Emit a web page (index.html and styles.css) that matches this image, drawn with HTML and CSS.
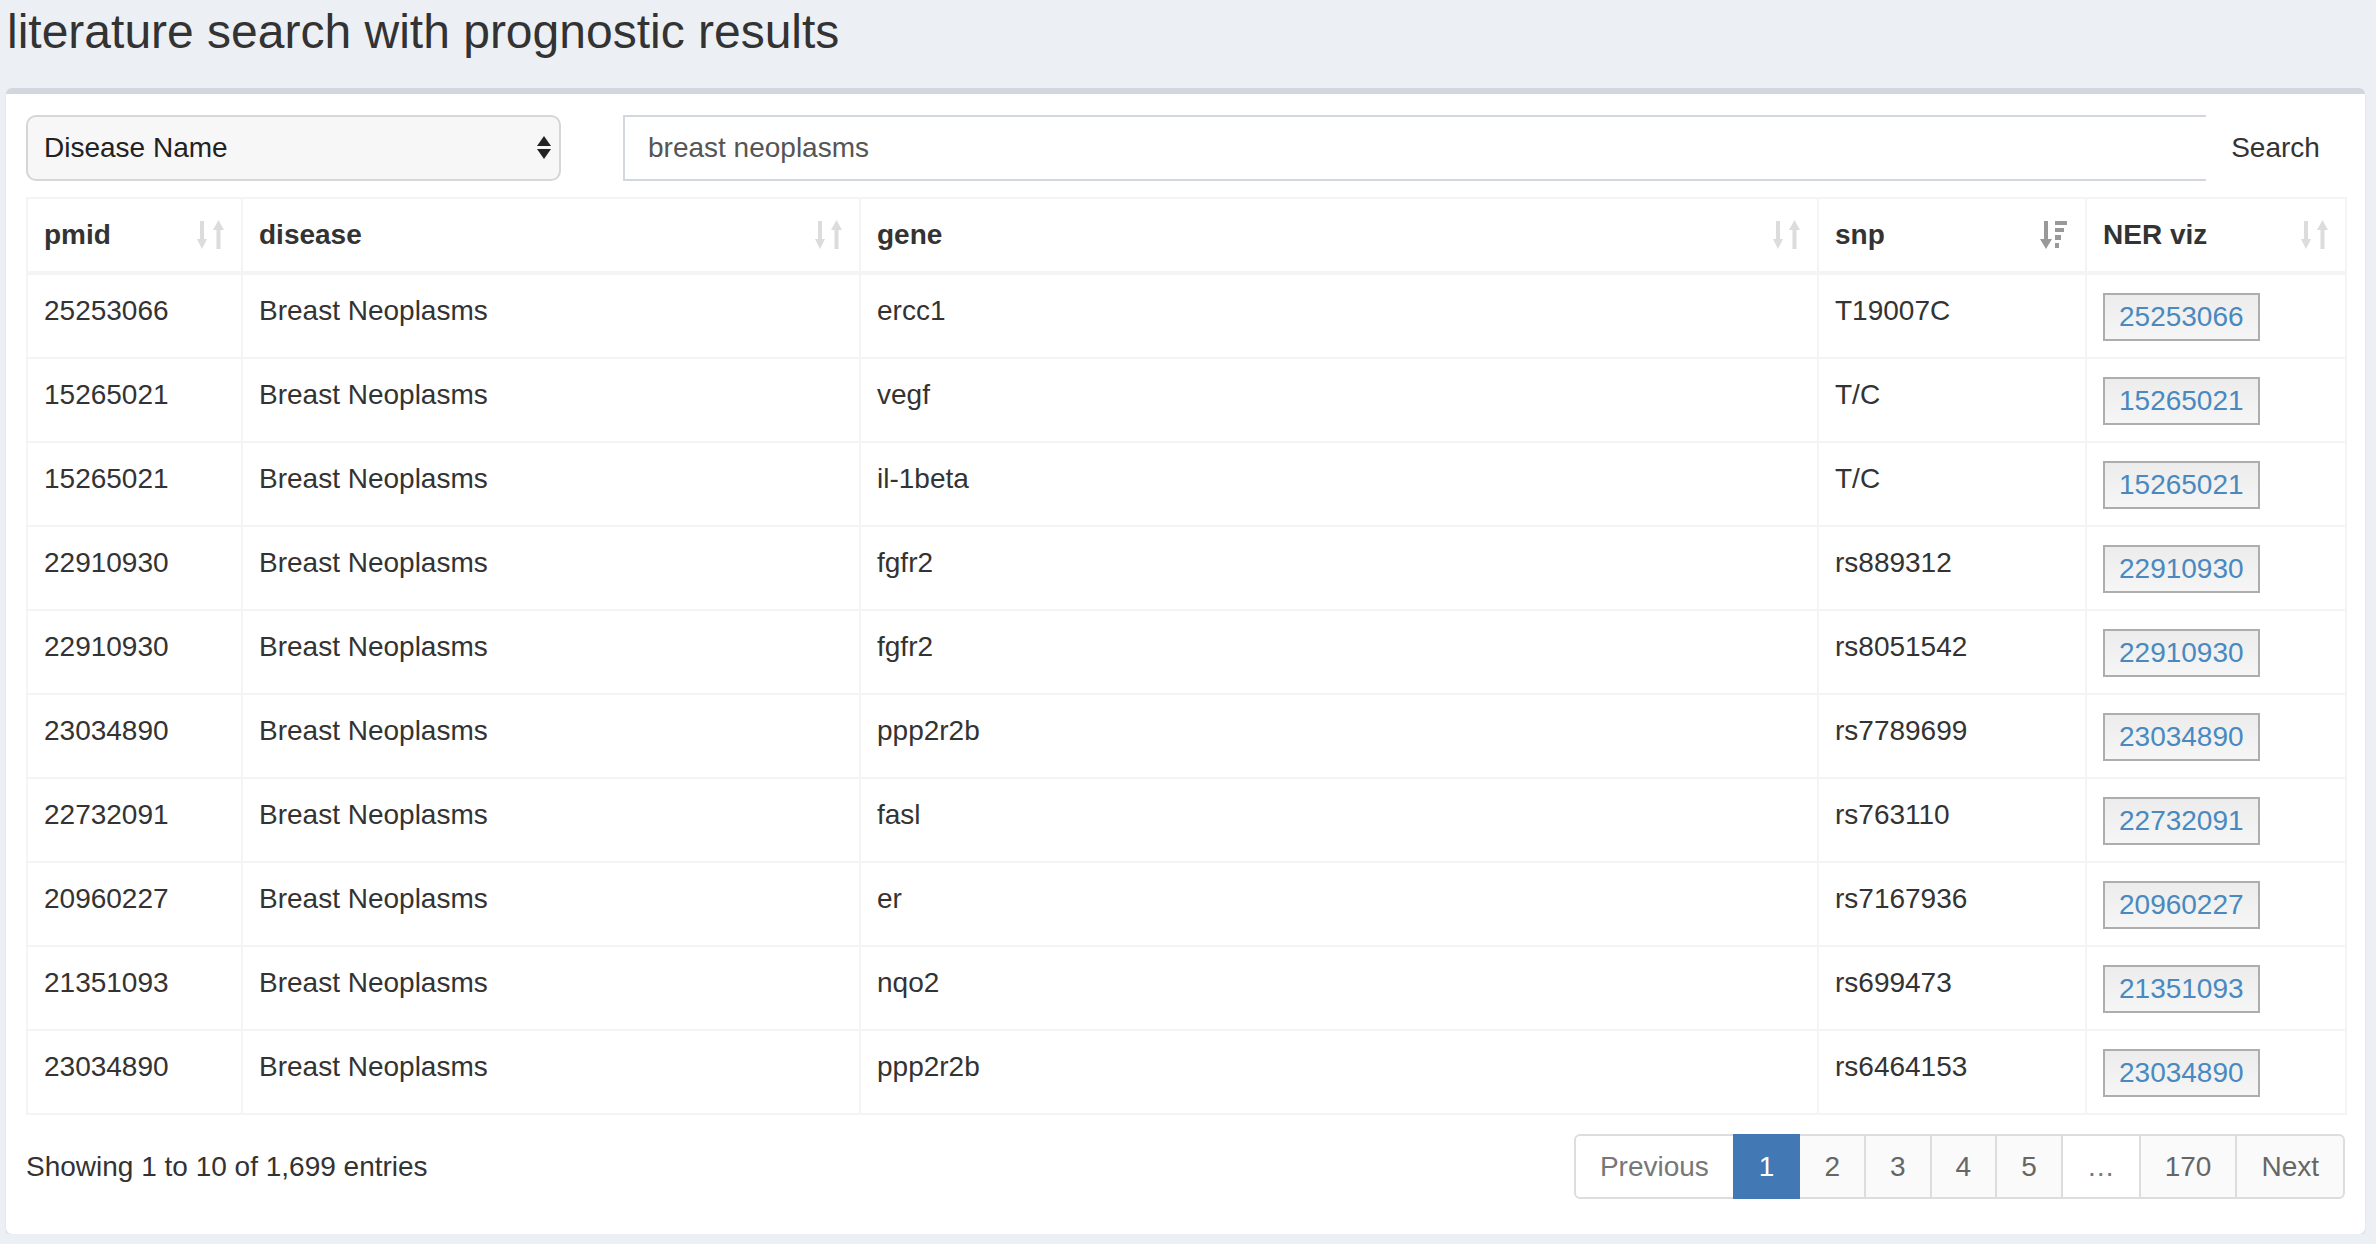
FILE: index.html
```html
<!DOCTYPE html>
<html>
<head>
<meta charset="utf-8">
<title>literature search with prognostic results</title>
<link rel="stylesheet" href="styles.css">
</head>
<body>
<h1 class="page-title">literature search with prognostic results</h1>
<div class="box">
  <div class="search-row">
    <div class="select">
      <span>Disease Name</span>
      <svg class="select-arrows" width="14" height="24" viewBox="0 0 14 24"><polygon points="7,0 14,10 0,10" fill="#222"/><polygon points="0,13 14,13 7,23" fill="#222"/></svg>
    </div>
    <div class="input-group">
      <div class="text-input">breast neoplasms</div>
      <div class="search-btn">Search</div>
    </div>
  </div>
  <table class="grid">
    <colgroup>
      <col class="c1"><col class="c2"><col class="c3"><col class="c4"><col class="c5">
    </colgroup>
    <thead>
      <tr>
        <th><div class="th-in"><span>pmid</span><svg class="sort" width="27" height="30" viewBox="0 0 27 30"><rect x="3" y="1" width="4" height="20" fill="#dcdcdc"/><polygon points="0,19 10,19 5,29" fill="#dcdcdc"/><polygon points="21.5,0 27,10 16,10" fill="#dcdcdc"/><rect x="19.5" y="9" width="4" height="20" fill="#dcdcdc"/></svg></div></th>
        <th><div class="th-in"><span>disease</span><svg class="sort" width="27" height="30" viewBox="0 0 27 30"><rect x="3" y="1" width="4" height="20" fill="#dcdcdc"/><polygon points="0,19 10,19 5,29" fill="#dcdcdc"/><polygon points="21.5,0 27,10 16,10" fill="#dcdcdc"/><rect x="19.5" y="9" width="4" height="20" fill="#dcdcdc"/></svg></div></th>
        <th><div class="th-in"><span>gene</span><svg class="sort" width="27" height="30" viewBox="0 0 27 30"><rect x="3" y="1" width="4" height="20" fill="#dcdcdc"/><polygon points="0,19 10,19 5,29" fill="#dcdcdc"/><polygon points="21.5,0 27,10 16,10" fill="#dcdcdc"/><rect x="19.5" y="9" width="4" height="20" fill="#dcdcdc"/></svg></div></th>
        <th><div class="th-in"><span>snp</span><svg class="sort" width="28" height="30" viewBox="0 0 28 30"><rect x="4" y="1" width="4" height="20" fill="#999"/><polygon points="0,19 12,19 6,29" fill="#999"/><rect x="15" y="1" width="12" height="4" fill="#999"/><rect x="15" y="8" width="9" height="4" fill="#999"/><rect x="15" y="15" width="6" height="5" fill="#999"/><rect x="15" y="23" width="4" height="5" fill="#999"/></svg></div></th>
        <th><div class="th-in"><span>NER viz</span><svg class="sort" width="27" height="30" viewBox="0 0 27 30"><rect x="3" y="1" width="4" height="20" fill="#dcdcdc"/><polygon points="0,19 10,19 5,29" fill="#dcdcdc"/><polygon points="21.5,0 27,10 16,10" fill="#dcdcdc"/><rect x="19.5" y="9" width="4" height="20" fill="#dcdcdc"/></svg></div></th>
      </tr>
    </thead>
    <tbody>
      <tr><td>25253066</td><td>Breast Neoplasms</td><td>ercc1</td><td>T19007C</td><td><span class="ner">25253066</span></td></tr>
      <tr><td>15265021</td><td>Breast Neoplasms</td><td>vegf</td><td>T/C</td><td><span class="ner">15265021</span></td></tr>
      <tr><td>15265021</td><td>Breast Neoplasms</td><td>il-1beta</td><td>T/C</td><td><span class="ner">15265021</span></td></tr>
      <tr><td>22910930</td><td>Breast Neoplasms</td><td>fgfr2</td><td>rs889312</td><td><span class="ner">22910930</span></td></tr>
      <tr><td>22910930</td><td>Breast Neoplasms</td><td>fgfr2</td><td>rs8051542</td><td><span class="ner">22910930</span></td></tr>
      <tr><td>23034890</td><td>Breast Neoplasms</td><td>ppp2r2b</td><td>rs7789699</td><td><span class="ner">23034890</span></td></tr>
      <tr><td>22732091</td><td>Breast Neoplasms</td><td>fasl</td><td>rs763110</td><td><span class="ner">22732091</span></td></tr>
      <tr><td>20960227</td><td>Breast Neoplasms</td><td>er</td><td>rs7167936</td><td><span class="ner">20960227</span></td></tr>
      <tr><td>21351093</td><td>Breast Neoplasms</td><td>nqo2</td><td>rs699473</td><td><span class="ner">21351093</span></td></tr>
      <tr><td>23034890</td><td>Breast Neoplasms</td><td>ppp2r2b</td><td>rs6464153</td><td><span class="ner">23034890</span></td></tr>
    </tbody>
  </table>
  <div class="footer-row">
    <div class="info">Showing 1 to 10 of 1,699 entries</div>
    <ul class="pagination">
      <li class="pg disabled first">Previous</li>
      <li class="pg active">1</li>
      <li class="pg">2</li>
      <li class="pg">3</li>
      <li class="pg">4</li>
      <li class="pg">5</li>
      <li class="pg disabled">…</li>
      <li class="pg">170</li>
      <li class="pg last">Next</li>
    </ul>
  </div>
</div>
</body>
</html>
```
FILE: styles.css
```css
html, body {
  margin: 0;
  padding: 0;
  background: #ecf0f5;
  font-family: "Liberation Sans", Arial, sans-serif;
  color: #333;
}

.page-title {
  margin: 0;
  padding: 6px 0 0 7px;
  font-size: 48px;
  font-weight: normal;
  line-height: 52px;
  height: 84px;
  box-sizing: border-box;
  color: #333;
}

.box {
  margin-left: 6px;
  width: 2359px;
  box-sizing: border-box;
  background: #fff;
  border-top: 6px solid #d2d6de;
  border-radius: 6px;
  box-shadow: 0 2px 2px rgba(0, 0, 0, 0.1);
  padding: 21px 20px 35px 20px;
  margin-top: 4px;
}

.search-row {
  display: flex;
  align-items: stretch;
  height: 66px;
  gap: 62px;
}

.select {
  width: 535px;
  box-sizing: border-box;
  background: #f7f7f7;
  border: 2px solid #d6d6d6;
  border-radius: 10px;
  display: flex;
  align-items: center;
  justify-content: space-between;
  padding: 0 8px 0 16px;
  font-size: 28px;
  color: #222;
}

.select-arrows {
  display: block;
}

.input-group {
  flex: 1;
  display: flex;
}

.text-input {
  flex: 1;
  box-sizing: border-box;
  border: 2px solid #d2d6de;
  border-right: none;
  display: flex;
  align-items: center;
  padding-left: 23px;
  font-size: 28px;
  color: #555;
}

.search-btn {
  width: 139px;
  display: flex;
  align-items: center;
  justify-content: center;
  font-size: 28px;
  color: #333;
}

.grid {
  margin-top: 16px;
  width: 2319px;
  table-layout: fixed;
  border-collapse: collapse;
  border: 2px solid #f4f4f4;
  font-size: 28px;
}

.c1 { width: 215px; }
.c2 { width: 618px; }
.c3 { width: 958px; }
.c4 { width: 268px; }
.c5 { width: 260px; }

.grid th {
  border: 2px solid #f4f4f4;
  border-bottom: 4px solid #f4f4f4;
  padding: 16px 16px 16px 16px;
  text-align: left;
  font-weight: bold;
  line-height: 40px;
  color: #333;
}

.th-in {
  display: flex;
  align-items: center;
  justify-content: space-between;
}

.sort {
  display: block;
  margin-right: 1px;
}

.grid td {
  border: 2px solid #f4f4f4;
  padding: 16px 16px;
  height: 50px;
  line-height: 40px;
  vertical-align: top;
  color: #333;
  white-space: nowrap;
}

.ner {
  display: inline-block;
  box-sizing: border-box;
  height: 48px;
  line-height: 44px;
  margin-top: 2px;
  padding: 0 14px;
  border: 2px solid #adadad;
  background: linear-gradient(#ececec, #f6f6f6);
  color: #4a89bf;
  vertical-align: top;
}

.footer-row {
  display: flex;
  justify-content: space-between;
  align-items: center;
  margin-top: 19px;
}

.info {
  font-size: 28px;
  color: #333;
}

.pagination {
  display: flex;
  margin: 0;
  padding: 0;
  list-style: none;
}

.pg {
  box-sizing: border-box;
  height: 65px;
  line-height: 61px;
  padding: 0 24px;
  border: 2px solid #ddd;
  margin-left: -2px;
  background: #fafafa;
  color: #666;
  font-size: 28px;
}

.pg.disabled {
  background: #fff;
  color: #777;
}

.pg.active {
  background: #4279b4;
  border-color: #4279b4;
  color: #fff;
  position: relative;
}

.pg.first {
  margin-left: 0;
  border-radius: 6px 0 0 6px;
  padding: 0 24px;
}

.pg.last {
  border-radius: 0 6px 6px 0;
}
```
